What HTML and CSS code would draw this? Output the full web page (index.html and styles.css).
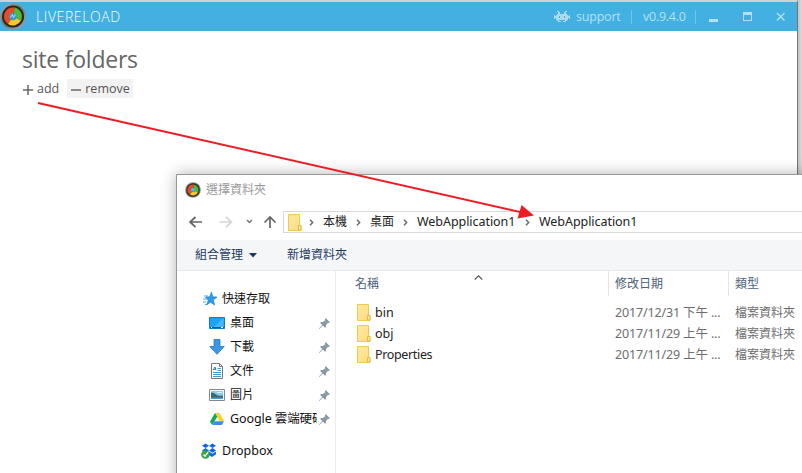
FILE: index.html
```html
<!DOCTYPE html>
<html lang="zh-Hant">
<head>
<meta charset="utf-8">
<title>LiveReload</title>
<link rel="stylesheet" href="styles.css">
</head>
<body>
<svg width="0" height="0" class="defs">
  <defs>
    <linearGradient id="fold" x1="0" y1="0" x2="1" y2="1"><stop offset="0" stop-color="#ffe9a0"/><stop offset="1" stop-color="#ffdc80"/></linearGradient>
    <linearGradient id="rim" x1="0" y1="0" x2="1" y2="1"><stop offset="0" stop-color="#aaa"/><stop offset=".5" stop-color="#77726e"/><stop offset="1" stop-color="#aaa"/></linearGradient>
    <symbol id="logo" viewBox="0 0 26 26">
      <circle cx="13" cy="13" r="12.7" fill="url(#rim)"/>
      <circle cx="13" cy="13" r="11" fill="#2b2522"/>
      <path d="M13 13 8 20.500A9 9 0 0 1 14.500 4.100Z" fill="#ea4a2c"/>
      <path d="M13 13 14.500 4.100A9 9 0 0 1 21 17Z" fill="#4dbb33"/>
      <path d="M13 13 21 17A9 9 0 0 1 8 20.500Z" fill="#f2cb28"/>
      <circle cx="13" cy="13" r="3.700" fill="#3e9bc7"/>
      <path d="m10.500 14 2-3 1 3 2-3" fill="none" stroke="#a9e2f5"/>
    </symbol>
    <symbol id="folder" viewBox="0 0 14 17">
      <path d="M.5.5h11v11h1.500v5H.5z" fill="url(#fold)" stroke="#efc953"/>
      <path d="M10.500 16v-4.500h2.500V16z" fill="#ffe79b" stroke="#e6bb3d"/>
    </symbol>
    <symbol id="pin" viewBox="0 0 11 11">
      <path d="M6.500 0 11 4.300 9.700 5.100 8.800 4.900 7 6.900 7.100 9 6 9.800 3.800 7.600.6 10.700 0 10.900.2 10.200 3.200 7 1.200 4.900 2 4 4 4.100 6.200 2.200 5.900 1.200Z" fill="#8b98a5"/>
    </symbol>
    <symbol id="chev" viewBox="0 0 5 7"><path d="m1 .7 2.700 2.800L1 6.300" fill="none" stroke="#666" stroke-width="1.400"/></symbol>
  </defs>
</svg>

<main class="desktop">
  <section class="app">
    <header class="app-bar">
      <svg class="app-logo"><use href="#logo"/></svg>
      <span class="app-name">LIVERELOAD</span>
      <svg class="invader" viewBox="0 0 16 12"><path d="M3 0h2v1h1v2h4V1h1V0h2v1h-1v2h1v1h1v1h1V4h1v4h-1V7h-1v2h-1v1h-1v1H9v-1h2V9H5v1h2v1H4v-1H3V9H2V7H1v1H0V4h1v1h1V4h1V3h1V1H3zM5 5v2h1V5zM10 5v2h1V5z" fill="#a9daf0" fill-rule="evenodd"/></svg>
      <span class="support">support</span>
      <i class="bar-rule"></i>
      <span class="version">v0.9.4.0</span>
      <i class="bar-rule"></i>
      <div class="win-buttons">
        <svg viewBox="0 0 78 13" width="78" height="13"><path d="M0 9h9v3H0z" fill="#b8e0f3"/><path d="M34 2h9v9h-9zM35 5v5h7V5z" fill="#b8e0f3" fill-rule="evenodd"/><path d="m68 3 7.500 7.500M75.500 3 68 10.500" stroke="#b8e0f3" stroke-width="1.300"/></svg>
      </div>
    </header>
    <div class="app-body">
      <h1>site folders</h1>
      <div class="actions">
        <button class="act"><svg viewBox="0 0 10 10" width="10" height="10"><path d="M0 5h10M5 0v10" stroke="#666" stroke-width="1.500"/></svg><span class="t-add">add</span></button>
        <button class="act shaded"><svg viewBox="0 0 10 10" width="10" height="10"><path d="M0 5h10" stroke="#666" stroke-width="1.500"/></svg><span class="t-remove">remove</span></button>
      </div>
    </div>
  </section>

  <section class="dialog">
    <header class="dlg-title"><svg class="dlg-logo"><use href="#logo"/></svg><span>選擇資料夾</span></header>
    <nav class="nav">
      <svg class="nav-arrows" viewBox="0 0 88 14" width="88" height="14" fill="none">
        <path d="M6.500 2 1 7l5.500 5M1 7h12" stroke="#666" stroke-width="1.700"/>
        <path d="m37 2 5.500 5-5.500 5M42.500 7h-12" stroke="#d6d6d6" stroke-width="1.700"/>
        <path d="m58 5 2.500 2.500L63 5" stroke="#777" stroke-width="1.500"/>
        <path d="M75.500 7.500 81 2 86.500 7.500M81 2v11" stroke="#666" stroke-width="1.700"/>
      </svg>
      <div class="address">
        <svg class="folder"><use href="#folder"/></svg>
        <svg class="chev c1"><use href="#chev"/></svg><span class="crumb cjk">本機</span>
        <svg class="chev c2"><use href="#chev"/></svg><span class="crumb cjk">桌面</span>
        <svg class="chev c3"><use href="#chev"/></svg><span class="crumb web">WebApplication1</span>
        <svg class="chev c4"><use href="#chev"/></svg><span class="crumb web">WebApplication1</span>
      </div>
    </nav>
    <div class="toolbar"><span class="organize">組合管理</span><svg class="caret" viewBox="0 0 8 5"><path d="M0 0h8L4 4.500z" fill="#1e3960"/></svg><span>新增資料夾</span></div>
    <div class="panes">
      <aside class="side">
        <div class="place root">
          <svg viewBox="0 0 16 16"><path d="m9.500 1 1.200 4.800 4.300.2-3.700 3.100 1.400 4.900-4.200-2.800L4.500 14l1.800-4.800L3.500 6l4.200-.2Z" fill="#2b9cec" stroke="#1677c8" stroke-width=".6"/><path d="M2 5h4M1 8h4M1 11h3M3 13.500h2" stroke="#4ba9e8"/></svg>
          <span>快速存取</span></div>
        <div class="place">
          <svg viewBox="0 0 16 16"><path d="M.5 2.500h15v11H.5z" fill="#1ba3f8" stroke="#167ac3"/><path d="m5 12 9.500-9v9z" fill="#45b9ff"/><path d="M1 12.500h14" stroke="#0d5da6"/><path d="M2 12.500h1M12 12.500h2" stroke="#fff"/></svg>
          <span>桌面</span><svg class="pin"><use href="#pin"/></svg></div>
        <div class="place">
          <svg viewBox="0 0 16 16"><path d="M5 .5h6v7h4.200L8 15.300.8 7.500H5z" fill="#3c97e4" stroke="#2379c5" stroke-width=".8"/></svg>
          <span>下載</span><svg class="pin"><use href="#pin"/></svg></div>
        <div class="place">
          <svg viewBox="0 0 16 16"><path d="M2.500.5h8l3 3v12h-11z" fill="#fff" stroke="#777"/><path d="M10.500.5v3h3" fill="none" stroke="#777"/><path d="M4 6.500h3M4 9.500h8M4 11.500h8M4 13.500h8M8.500 5.500H12M8.500 7.500H12" stroke="#3d9bdc"/><path d="m4 7 2-3 1 3" fill="none" stroke="#2580bd"/></svg>
          <span>文件</span><svg class="pin"><use href="#pin"/></svg></div>
        <div class="place">
          <svg viewBox="0 0 16 16"><path d="M.5 2.500h15v11H.5z" fill="#fff" stroke="#888"/><path d="M2 4h12v8H2z" fill="#8dc8ef"/><path d="M2 5.500q3 0 5 2t7 1V12H2z" fill="#386b70"/><path d="M2 10.500h12V12H2z" fill="#4a9ad0"/><path d="M8 5.500h5" stroke="#e1f2fb"/></svg>
          <span>圖片</span><svg class="pin"><use href="#pin"/></svg></div>
        <div class="place">
          <svg viewBox="0 0 16 16"><path d="M6 2h4.500l4.500 8h-4.500z" fill="#fc3"/><path d="M6 2 1 10.500 3.300 14l5-8.200z" fill="#11a861"/><path d="M5.500 10.300H15L12.800 14H3.300z" fill="#4285f4"/></svg>
          <span class="gdrive">Google 雲端硬碟</span><svg class="pin"><use href="#pin"/></svg></div>
        <div class="place dropbox">
          <svg viewBox="0 0 16 16"><path d="m4.500.5 3.500 2.300-3.500 2.300L1 2.800zM11.500.5 15 2.800l-3.500 2.300L8 2.800zM4.500 5.100 8 7.400 4.500 9.700 1 7.400zM11.500 5.100 15 7.400l-3.500 2.300L8 7.400zM8 8.500l3.500 2.300L15 8.500v2.800L11 14l-3-2z" fill="#0d65ee"/><circle cx="4.500" cy="11.500" r="4.300" fill="#35a443"/><path d="m2.500 11.500 1.500 1.700 3-3.700" fill="none" stroke="#fff" stroke-width="1.400"/></svg>
          <span>Dropbox</span></div>
      </aside>
      <div class="files">
        <div class="row head">
          <span class="c-name">名稱<svg class="sort" viewBox="0 0 9 5"><path d="m.7 4.500 3.800-3.600 3.800 3.600" fill="none" stroke="#555" stroke-width="1.200"/></svg></span>
          <span class="c-date">修改日期</span><span class="c-type">類型</span></div>
        <div class="row"><span class="c-name"><svg class="folder"><use href="#folder"/></svg>bin</span><span class="c-date">2017/12/31 下午 ...</span><span class="c-type">檔案資料夾</span></div>
        <div class="row"><span class="c-name"><svg class="folder"><use href="#folder"/></svg>obj</span><span class="c-date">2017/11/29 上午 ...</span><span class="c-type">檔案資料夾</span></div>
        <div class="row"><span class="c-name"><svg class="folder"><use href="#folder"/></svg><span class="long">Properties</span></span><span class="c-date">2017/11/29 上午 ...</span><span class="c-type">檔案資料夾</span></div>
      </div>
    </div>
  </section>

  <svg class="pointer" viewBox="0 0 802 473"><path d="M38 103 520 212" stroke="#ed1c24" stroke-width="2"/><path d="m521.500 205 12.500 10.500-16.500 3z" fill="#ed1c24"/></svg>
</main>
</body>
</html>
```
FILE: styles.css
```css
* { box-sizing: border-box; }
body { margin: 0; font: 12.5px/20px "Noto Sans", "Noto Sans CJK TC", sans-serif; color: #222; }
svg { display: block; flex: none; }
.defs { position: absolute; }
span { white-space: nowrap; }
.desktop { position: relative; width: 802px; height: 473px; overflow: hidden; background: linear-gradient(90deg, #bbb 797px, #ddd 802px); }

.app { width: 798px; height: 473px; border-top: 2px solid #d0d0d0; border-right: 1px solid #777; background: #fff; }
.app-bar { display: flex; align-items: center; height: 29px; background: #42b1e1; color: #b6e0f3; }
.app-logo { width: 26px; height: 27px; }
.app-name { width: 527px; padding-left: 10px; color: #fff; font: 300 14px/20px "Open Sans", sans-serif; letter-spacing: .6px; }
.invader { width: 16px; height: 12px; margin-left: 1px; }
.support { width: 61px; padding-left: 6px; font: 12.5px/20px "Open Sans", sans-serif; letter-spacing: -.2px; }
.bar-rule { width: 1px; height: 14px; background: #70c6eb; }
.version { width: 63px; padding-left: 11px; font: 12.5px/20px "Open Sans", sans-serif; letter-spacing: -.25px; }
.win-buttons { margin-left: 13px; }
.app-body { padding: 12px 22px; }
h1 { margin: 0; font: 400 23px/32px "Open Sans", sans-serif; letter-spacing: -.23px; color: #666; }
.actions { display: flex; margin-top: 4px; }
.act { display: flex; align-items: center; gap: 4px; height: 19px; padding: 0 0 0 1px; margin-right: 8px; border: 0; background: none; color: #555; font: 12.5px/18px "Open Sans", sans-serif; }
.act > svg { margin-top: 2px; }
.act.shaded { width: 66px; padding-left: 4px; background: #f2f2f2; }

.dialog { position: absolute; left: 176px; top: 174px; width: 640px; height: 310px; border: 1px solid #999; background: #fff; box-shadow: 0 0 14px rgba(0, 0, 0, .3); }
.dlg-title { display: flex; align-items: center; gap: 5px; height: 30px; padding-left: 8px; color: #999; font-size: 12px; }
.dlg-logo { width: 16px; height: 16px; }
.nav { display: flex; align-items: center; height: 35px; padding: 0 0 1px 12px; }
.nav-arrows { margin-right: 6px; }
.address { display: flex; align-items: center; flex: 1; height: 22px; border: 1px solid #d9d9d9; padding-left: 4px; }
.folder { width: 14px; height: 17px; }
.chev { width: 5px; height: 7px; }
.c1 { margin: 0 9px 0 7px; }
.c2, .c3 { margin: 0 9px; }
.c4 { margin: 0 9px 0 10px; }
.cjk { width: 24px; font-size: 12px; }
.web { width: 98px; letter-spacing: -.05px; }
.toolbar { display: flex; align-items: center; height: 31px; padding-left: 18px; background: #f4f6f8; border-bottom: 1px solid #e6e8ea; color: #1e3960; font-size: 12px; }
.caret { width: 8px; height: 5px; margin: 0 30px 0 6px; }
.panes { display: flex; height: 202px; }
.side { width: 159px; padding-top: 16px; border-right: 1px solid #ececec; }
.place { display: flex; align-items: center; height: 24px; padding: 0 5px 0 32px; font-size: 12px; color: #111; }
.place > svg { width: 16px; height: 16px; }
.place > span { flex: 1; margin-left: 5px; overflow: hidden; }
.place > .pin { width: 11px; height: 11px; }
.place.root { padding-left: 25px; }
.place.root > span { margin-left: 4px; }
.place > .gdrive { margin-right: 2px; font-size: 12.5px; letter-spacing: -.1px; }
.place.dropbox { margin-top: 8px; padding-left: 24px; font-size: 12.5px; }
.files { flex: 1; padding-left: 19px; }
.row { display: flex; align-items: center; height: 21px; }
.row.head { height: 25px; margin-bottom: 6px; color: #4c607a; font-size: 12px; }
.c-name { position: relative; display: flex; align-items: center; gap: 4px; width: 253px; padding-left: 2px; }
.long { letter-spacing: -.35px; }
.head .c-name { padding: 0; }
.sort { position: absolute; left: 119px; top: 1px; width: 9px; height: 5px; }
.c-date { width: 120px; padding-left: 7px; color: #6d6d6d; letter-spacing: -.15px; }
.c-type { padding-left: 7px; color: #6d6d6d; font-size: 12px; }
.head .c-date, .head .c-type { height: 25px; line-height: 25px; border-left: 1px solid #e5e5e5; color: #4c607a; }
.head .c-date { padding-left: 6px; letter-spacing: 0; }
.head .c-type { padding-left: 6px; }
.pointer { position: absolute; left: 0; top: 0; width: 802px; height: 473px; }
```
